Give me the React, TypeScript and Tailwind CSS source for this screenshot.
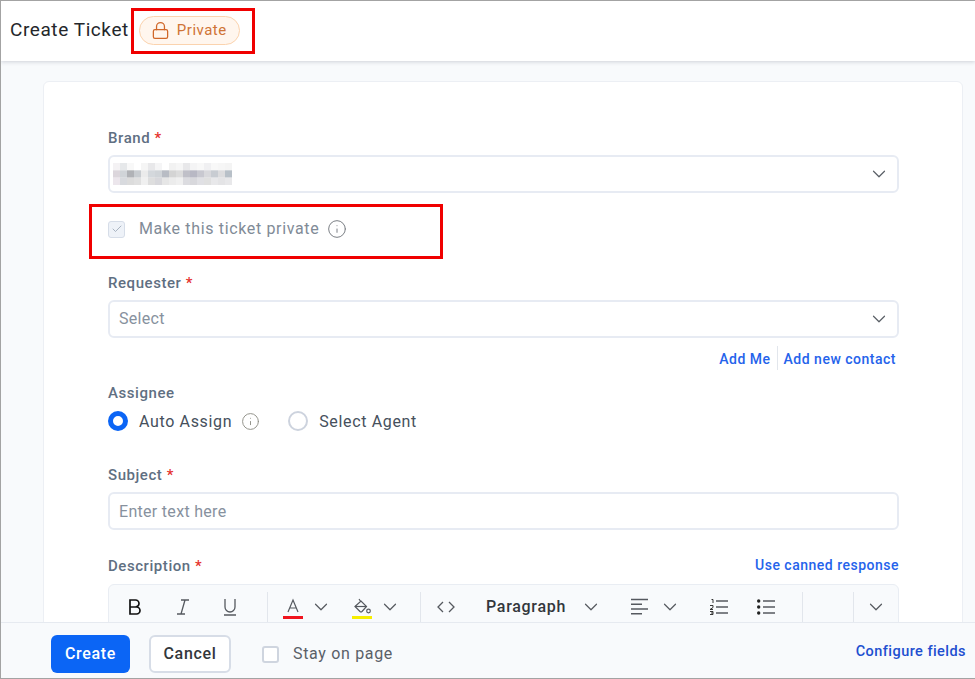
import React from "react";
import { ChevronDown, Lock, Info, Check } from "lucide-react";

const blurRows: string[][] = [
  ["f4f2f4", "e6e8ea", "f8f8f8", "ffffff", "f5f5f5", "e8e8ea", "f5f5f6", "ffffff", "f2f2f2", "f6f6f6", "e8e8ea", "f4f4f5", "f8f8f8", "f0f0f2", "f8f8f8", "f6f6f6", "f4f4f4"],
  ["dcd6dc", "d0d4d8", "b0b2b6", "c8ccd0", "ebebeb", "d4d8dc", "d0d4d8", "b8bcc4", "d4d4d4", "dcdcdc", "c0c0c8", "b8b8c4", "c8c8d0", "d8d8dc", "c8ccd2", "dcdcde", "b8c0c8"],
  ["ece6ec", "d8dade", "dcdcdc", "e0e0e0", "f0f0f0", "dedede", "d8d8dc", "e6e6e6", "ececec", "f0f0f0", "dcdce0", "d8d8dc", "e0e0e4", "e0e0e0", "e8e8ea", "e4e4e6", "e8e8ea"],
];

function Req({ children }: { children: React.ReactNode }) {
  return (
    <div className="h-5 text-[15px] leading-[22px] font-medium tracking-[0.56px] text-[#5f6f82]">
      {children} <span className="text-[#e5322d]">*</span>
    </div>
  );
}

function Field({ children, className = "" }: { children?: React.ReactNode; className?: string }) {
  return (
    <div className={`h-[38px] mt-2 rounded-md border-2 border-[#e7ebf3] bg-white flex items-center justify-between pl-[9px] pr-[7px] ${className}`}>
      {children}
    </div>
  );
}

function Chev({ className = "text-[#5a5f66]" }: { className?: string }) {
  return <ChevronDown size={22} strokeWidth={1.3} className={`shrink-0 ${className}`} />;
}

function Sep({ className = "" }: { className?: string }) {
  return <div className={`w-px h-[40px] self-start mt-[7px] bg-[#e2e6ec] shrink-0 ${className}`} />;
}

export default function App() {
  return (
    <div
      className="w-[975px] h-[679px] overflow-hidden flex flex-col bg-[#f8fafc] border-t border-l border-b border-[#a3a3a3] relative"
      style={{ fontFamily: "Roboto, 'Liberation Sans', sans-serif" }}
    >
      <header className="h-[60px] shrink-0 bg-white flex items-center pl-[9px] shadow-[0_1px_4px_rgba(60,70,90,0.22)] relative z-10">
        <h1 className="text-[19px] font-normal tracking-[0.58px] text-[#24272b] leading-6 -mt-[2px]">Create Ticket</h1>
        <div className="ml-[10px] -mt-[1px] h-[29px] w-[101px] rounded-full border border-[#fbd3ae] bg-[#fff6ee] flex items-center pl-[11px] text-[#cf7436]">
          <Lock size={19} strokeWidth={1.6} className="text-[#d0682a] shrink-0" />
          <span className="ml-[7px] text-[15px] tracking-[0.5px]">Private</span>
        </div>
      </header>

      <main className="flex-1 min-h-0 pt-5 pl-[42px] pr-[12px] overflow-hidden">
        <div className="h-[700px] rounded-t-md border border-[#eceff4] bg-white pt-[45px] pl-[64px] pr-[63px]">
          <Req>Brand</Req>
          <Field>
            <svg width="119" height="22" viewBox="0 0 119 22" className="-ml-[6px] -mt-[1px]" aria-hidden="true">
              {blurRows.map((row, y) =>
                row.map((c, x) => <rect key={`${x}-${y}`} x={x * 7} y={y * 7.3} width={7} height={7.4} fill={`#${c}`} />)
              )}
            </svg>
            <Chev />
          </Field>

          <div className="mt-[26px] h-5 flex items-center">
            <span className="w-[17px] h-[17px] rounded-[3px] border border-[#d6dde8] bg-[#eef2f8] flex items-center justify-center">
              <Check size={12} strokeWidth={1.6} className="text-[#97a3b3]" />
            </span>
            <span className="ml-[14px] text-[16px] tracking-[0.65px] text-[#818b97]">Make this ticket private</span>
            <Info size={20} strokeWidth={1.2} className="ml-[8px] text-[#7b7f85]" />
          </div>

          <div className="mt-[33px]">
            <Req>Requester</Req>
          </div>
          <Field>
            <span className="text-[16px] tracking-[0.3px] text-[#87919e]">Select</span>
            <Chev />
          </Field>

          <div className="mt-[10px] h-5 flex items-center justify-end pr-[3px] text-[14px] leading-[22px] font-medium tracking-[0.5px] text-[#2563eb]">
            <span className="pt-[1px]">Add Me</span>
            <div className="w-px h-6 bg-[#e2e6ec] mx-[6px]" />
            <span className="pt-[1px]">Add new contact</span>
          </div>

          <div className="mt-[14px] h-5 text-[15px] leading-[22px] font-medium tracking-[0.56px] text-[#5f6f82]">Assignee</div>

          <div className="mt-[9px] h-5 flex items-center text-[16px] tracking-[0.65px] text-[#46505c]">
            <span className="w-5 h-5 rounded-full border-[5px] border-[#0b65f5] bg-white shrink-0" />
            <span className="ml-[11px] pt-[1px]">Auto Assign</span>
            <Info size={19} strokeWidth={1.2} className="ml-[9px] text-[#8f8f87]" />
            <span className="ml-[28px] w-5 h-5 rounded-full border-2 border-[#cdd3de] bg-white shrink-0" />
            <span className="ml-[11px] pt-[1px]">Select Agent</span>
          </div>

          <div className="mt-[33px]">
            <Req>Subject</Req>
          </div>
          <Field>
            <span className="text-[16px] tracking-[0.3px] text-[#87919e] pt-[1px]">Enter text here</span>
          </Field>

          <div className="mt-[25px] h-5 flex items-center justify-between">
            <Req>Description</Req>
            <span className="text-[14px] font-medium tracking-[0.5px] text-[#2563eb] pt-[1px]">Use canned response</span>
          </div>

          <div className="mt-[9px] h-[60px] rounded-t-md border border-[#e9edf3] bg-[#f8fafc] flex items-center text-[#55595f] pb-[15px]">
            <svg width="16" height="18" viewBox="0 0 16 18" className="ml-[18px] shrink-0 text-[#111]" fill="none" stroke="currentColor" strokeWidth="1.7" aria-hidden="true">
              <path d="M3 2h5.5a3.5 3.5 0 0 1 0 7H3zM3 9h6.5a3.5 3.5 0 0 1 0 7H3z" />
            </svg>
            <svg width="16" height="18" viewBox="0 0 16 18" className="ml-[32px] shrink-0" fill="none" stroke="currentColor" strokeWidth="1.3" aria-hidden="true">
              <path d="M6 2h8M2 16h8M10 2 6 16" />
            </svg>
            <svg width="16" height="18" viewBox="0 0 16 18" className="ml-[31px] shrink-0" fill="none" stroke="currentColor" strokeWidth="1.3" aria-hidden="true">
              <path d="M3 1v8a5 5 0 0 0 10 0V1M2 17h12" />
            </svg>
            <Sep className="ml-[29px]" />
            <svg width="20" height="22" viewBox="0 0 20 22" className="ml-[15px] mt-[4px] shrink-0" fill="none" aria-hidden="true">
              <path d="M5 14 10 2l5 12M6.6 10h6.8" stroke="currentColor" strokeWidth="1.2" />
              <rect y="18" width="20" height="3" fill="#f0141e" />
            </svg>
            <Chev className="ml-[7px] text-[#55595f]" />
            <svg width="20" height="22" viewBox="0 0 20 22" className="ml-[20px] mt-[4px] shrink-0" fill="none" aria-hidden="true">
              <path d="M7 1l2 3M3 8.5 9 3l5.5 5.5L10 13.5a1.5 1.5 0 0 1-2 0z" stroke="currentColor" strokeWidth="1.2" />
              <path d="M3 8.5h11.5" stroke="currentColor" strokeWidth="1.2" />
              <circle cx="16.5" cy="13" r="1.8" stroke="currentColor" strokeWidth="1.2" />
              <rect y="18" width="20" height="3" fill="#f6ee00" />
            </svg>
            <Chev className="ml-[7px] text-[#55595f]" />
            <Sep className="ml-[19px]" />
            <svg width="18" height="12" viewBox="0 0 18 12" className="ml-[16px] shrink-0" fill="none" stroke="currentColor" strokeWidth="1.3" aria-hidden="true">
              <path d="M6 1 1 6l5 5M12 1l5 5-5 5" />
            </svg>
            <span className="ml-[31px] w-[80px] shrink-0 text-[16px] font-medium tracking-[0.7px] text-[#33373c] whitespace-nowrap">Paragraph</span>
            <Chev className="ml-[14px] text-[#55595f]" />
            <svg width="17" height="17" viewBox="0 0 17 17" className="ml-[29px] shrink-0" fill="none" stroke="currentColor" strokeWidth="1.4" aria-hidden="true">
              <path d="M0 1.5h17M0 6.3h11M0 11h17M0 15.8h11" />
            </svg>
            <Chev className="ml-[11px] text-[#55595f]" />
            <svg width="18" height="16" viewBox="0 0 18 16" className="ml-[29px] shrink-0" fill="none" aria-hidden="true">
              <path d="M6 2h12M6 8h12M6 14h12" stroke="currentColor" strokeWidth="1.3" />
              <path d="M1.5.5h1.5v3.5M0 6.5h3v2L0 10.5h3M0 12.5h3v3H0M1 14h2" stroke="#222" strokeWidth="0.9" />
            </svg>
            <svg width="18" height="16" viewBox="0 0 18 16" className="ml-[29px] shrink-0" fill="none" aria-hidden="true">
              <path d="M6 2h12M6 8h12M6 14h12" stroke="currentColor" strokeWidth="1.3" />
              <circle cx="1.7" cy="2" r="1.7" fill="#222" />
              <circle cx="1.7" cy="8" r="1.7" fill="#222" />
              <circle cx="1.7" cy="14" r="1.7" fill="#222" />
            </svg>
            <Sep className="ml-[27px]" />
            <Sep className="ml-[50px]" />
            <Chev className="ml-[11px] text-[#55595f]" />
          </div>
        </div>
      </main>

      <footer className="h-[56px] shrink-0 bg-[#f8fafc] border-t border-[#e6eaf0] flex items-center pl-[50px] pr-[9px] relative z-10">
        <button className="w-[79px] h-[38px] mt-[7px] rounded-md bg-[#0b65f5] text-white text-[16px] font-medium tracking-[0.7px]">Create</button>
        <button className="ml-[19px] w-[82px] h-[38px] mt-[7px] rounded-md border-2 border-[#d7dde7] bg-white text-[#33373c] text-[16px] font-medium tracking-[0.7px]">Cancel</button>
        <span className="ml-[31px] mt-[7px] w-[17px] h-[17px] rounded-[3px] border-2 border-[#cfd5df] bg-white" />
        <span className="ml-[14px] mt-[6px] text-[16px] tracking-[0.67px] text-[#5a6068]">Stay on page</span>
        <span className="ml-auto mt-[2px] text-[14.5px] font-medium tracking-[0.45px] text-[#1e4fd0]">Configure fields</span>
      </footer>

      <div className="absolute left-[130px] top-[7px] w-[124px] h-[46px] border-[3px] border-[#f00000] z-20 pointer-events-none" />
      <div className="absolute left-[88px] top-[203px] w-[354px] h-[55px] border-[3px] border-[#f00000] z-20 pointer-events-none" />
    </div>
  );
}
